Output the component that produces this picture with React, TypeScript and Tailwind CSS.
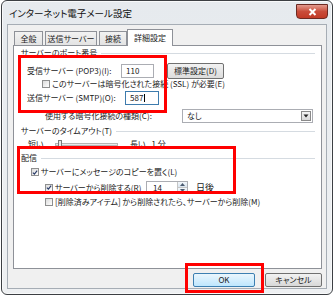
import React from 'react';

const font = "font-['Noto_Sans_CJK_JP','Noto_Sans',sans-serif] [font-feature-settings:'palt']";

const CheckBox: React.FC<{ checked?: boolean }> = ({ checked }) => (
  <span className="w-[8px] h-[8px] border border-[#8e8f8f] bg-gradient-to-br from-[#dcdcdc] to-white flex items-center justify-center shrink-0">
    {checked && (
      <svg width="7" height="7" viewBox="0 0 7 7">
        <path d="M1 3.6 L2.8 5.4 L6 1.2" stroke="#2d3e6a" strokeWidth="1.4" fill="none" />
      </svg>
    )}
  </span>
);

const GroupHeader: React.FC<{ label: string }> = ({ label }) => (
  <div className="h-[10px] flex items-center pl-[7px] pr-[6px] gap-[4px]">
    <span className="whitespace-nowrap text-[#222]">{label}</span>
    <span className="flex-1 h-px bg-[#d5dbe1]" />
  </div>
);

const App: React.FC = () => {
  return (
    <div className={`w-[335px] h-[298px] bg-white relative overflow-hidden text-[8px] leading-none text-[#1a1a1a] ${font}`}>
      {/* ウィンドウ枠 */}
      <div className="ml-[1px] w-[332px] h-[295px] border border-[#3c3f43] rounded-[6px] bg-gradient-to-b from-[#e6eaee] to-[#eef0f2] flex flex-col shadow-[inset_0_0_0_1px_#f8f9fa]">
        {/* タイトルバー */}
        <div className="h-[23px] flex items-start shrink-0">
          <span className="pl-[7px] pt-[8px] text-[9.5px] text-[#101010]">インターネット電子メール設定</span>
          <div className="ml-auto mr-[4px] mt-[3px] w-[32px] h-[15px] rounded-b-[4px] border border-[#6d2a22] bg-gradient-to-b from-[#e39a8e] via-[#c94c3a] to-[#c23a26] flex items-center justify-center">
            <svg width="9" height="8" viewBox="0 0 9 8">
              <path d="M1.5 1 L7.5 7 M7.5 1 L1.5 7" stroke="#fff" strokeWidth="2" />
            </svg>
          </div>
        </div>

        {/* クライアント領域 */}
        <div className="mx-[5px] h-[265px] border border-[#a6adb5] bg-[#f0f0f0] flex flex-col">
          {/* タブ */}
          <div className="mt-[4px] ml-[6px] h-[16px] flex items-end relative z-10">
            <div className="w-[29px] h-[14px] border border-b-0 border-[#8e9198] bg-gradient-to-b from-[#f2f2f2] to-[#e3e3e3] flex items-center justify-center">全般</div>
            <div className="ml-[2px] w-[52px] h-[14px] border border-b-0 border-[#8e9198] bg-gradient-to-b from-[#f2f2f2] to-[#e3e3e3] flex items-center justify-center whitespace-nowrap">送信サーバー</div>
            <div className="ml-[2px] w-[28px] h-[14px] border border-b-0 border-[#8e9198] bg-gradient-to-b from-[#f2f2f2] to-[#e3e3e3] flex items-center justify-center">接続</div>
            <div className="w-[46px] h-[17px] -mb-px border border-b-0 border-[#8e9198] bg-white flex items-center justify-center">詳細設定</div>
          </div>

          {/* タブパネル */}
          <div className="ml-[5px] mr-[4px] h-[224px] border border-[#8e9198] bg-white flex flex-col pt-[2px]">
            <GroupHeader label="サーバーのポート番号" />

            <div className="mt-[5px] h-[16px] flex items-center pl-[13px]">
              <span className="w-[94px] whitespace-nowrap">受信サーバー (POP3)(I):</span>
              <span className="w-[33px] h-[14px] border border-[#abadb3] flex items-center pl-[4px]">110</span>
              <span className="ml-[13px] w-[57px] h-[16px] border border-[#707070] rounded-[2px] bg-gradient-to-b from-[#f2f2f2] to-[#dcdcdc] flex items-center justify-center">標準設定(D)</span>
            </div>

            <div className="h-[10px] flex items-center pl-[28px] gap-[2px]">
              <CheckBox />
              <span className="whitespace-nowrap">このサーバーは暗号化された接続 (SSL) が必要(E)</span>
            </div>

            <div className="mt-[2px] h-[14px] flex items-center pl-[13px]">
              <span className="w-[98px] whitespace-nowrap">送信サーバー (SMTP)(O):</span>
              <span className="w-[34px] h-[14px] border border-[#3d7bad] flex items-center pl-[4px]">587<span className="w-px h-[8px] bg-black ml-px" /></span>
            </div>

            <div className="mt-[4px] h-[14px] flex items-center pl-[31px]">
              <span className="w-[137px] whitespace-nowrap">使用する暗号化接続の種類(C):</span>
              <span className="w-[131px] h-[14px] border border-[#abadb3] flex items-center pl-[4px]">
                なし
                <span className="ml-auto mr-[1px] w-[10px] h-[10px] border border-[#8a8a8a] bg-gradient-to-b from-[#f4f4f4] to-[#d8d8d8] flex items-center justify-center">
                  <svg width="6" height="4" viewBox="0 0 6 4"><path d="M0.5 0.5 L5.5 0.5 L3 3.5 Z" fill="#222" /></svg>
                </span>
              </span>
            </div>

            <div className="mt-[3px]">
              <GroupHeader label="サーバーのタイムアウト(T)" />
            </div>

            <div className="mt-[3px] h-[10px] flex items-center pl-[14px]">
              <span className="w-[27px]">短い</span>
              <span className="relative w-[63px] h-[3px] border border-[#b5b5b5] bg-[#e7eaea]">
                <span className="absolute left-[2px] -top-[4px] w-[4px] h-[9px] border border-[#7b7b7b] bg-[#e9e9e9]" />
              </span>
              <span className="ml-[12px]">長い</span>
              <span className="ml-[6px]">1 分</span>
            </div>

            <div className="mt-[4px]">
              <GroupHeader label="配信" />
            </div>

            <div className="mt-[4px] h-[10px] flex items-center pl-[17px] gap-[2px]">
              <CheckBox checked />
              <span className="whitespace-nowrap">サーバーにメッセージのコピーを置く(L)</span>
            </div>

            <div className="mt-[4px] h-[13px] flex items-center pl-[31px]">
              <CheckBox checked />
              <span className="ml-[2px] w-[91px] whitespace-nowrap">サーバーから削除する(R)</span>
              <span className="w-[42px] h-[13px] border border-[#abadb3] flex items-center pl-[6px]">
                14
                <span className="ml-auto w-[10px] h-full flex flex-col border-l border-[#c5c5c5]">
                  <span className="flex-1 flex items-center justify-center bg-gradient-to-b from-[#f3f7fb] to-[#d9e5f0]">
                    <svg width="5" height="3" viewBox="0 0 5 3"><path d="M0 3 L2.5 0 L5 3 Z" fill="#4a5a70" /></svg>
                  </span>
                  <span className="flex-1 flex items-center justify-center bg-gradient-to-b from-[#f3f7fb] to-[#d9e5f0] border-t border-[#c5c5c5]">
                    <svg width="5" height="3" viewBox="0 0 5 3"><path d="M0 0 L5 0 L2.5 3 Z" fill="#4a5a70" /></svg>
                  </span>
                </span>
              </span>
              <span className="ml-[8px] text-[9px]">日後</span>
            </div>

            <div className="mt-[3px] h-[10px] flex items-center pl-[31px] gap-[2px]">
              <CheckBox />
              <span className="whitespace-nowrap">[削除済みアイテム] から削除されたら、サーバーから削除(M)</span>
            </div>
          </div>

          {/* ボタン */}
          <div className="mt-[4px] mr-[4px] h-[14px] flex justify-end gap-[10px]">
            <span className="w-[62px] h-[14px] border border-[#3c7fb1] rounded-[2px] bg-gradient-to-b from-[#eaf6fd] to-[#bee6fd] flex items-center justify-center">OK</span>
            <span className="w-[57px] h-[14px] border border-[#707070] rounded-[2px] bg-gradient-to-b from-[#f2f2f2] to-[#d8d8d8] flex items-center justify-center">キャンセル</span>
          </div>
        </div>
      </div>

      {/* 赤枠 */}
      <div className="absolute left-[18px] top-[55px] w-[149px] h-[58px] border-[3px] border-[#ff0000] pointer-events-none" />
      <div className="absolute left-[17px] top-[146px] w-[219px] h-[48px] border-[3px] border-[#ff0000] pointer-events-none" />
      <div className="absolute left-[185px] top-[263px] w-[79px] h-[30px] border-[3px] border-[#ff0000] pointer-events-none" />
    </div>
  );
};

export default App;
